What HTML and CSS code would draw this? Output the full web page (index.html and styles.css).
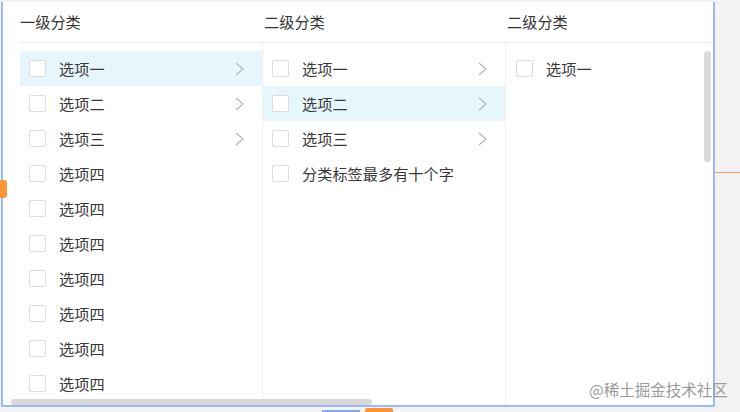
FILE: index.html
```html
<!DOCTYPE html>
<html lang="zh">
<head>
<meta charset="utf-8">
<link rel="stylesheet" href="styles.css">
</head>
<body>
<div class="page">
  <div class="frame">
    <div class="scroller">
      <div class="header">
        <div class="hcell c1">一级分类</div>
        <div class="hcell c2">二级分类</div>
        <div class="hcell c3">二级分类</div>
      </div>
      <div class="cols">
        <div class="col c1">
          <div class="row active"><span class="box"></span><span class="label">选项一</span><svg class="arrow" viewBox="0 0 9 14"><polyline points="1,1 8,7 1,13"/></svg></div>
          <div class="row"><span class="box"></span><span class="label">选项二</span><svg class="arrow" viewBox="0 0 9 14"><polyline points="1,1 8,7 1,13"/></svg></div>
          <div class="row"><span class="box"></span><span class="label">选项三</span><svg class="arrow" viewBox="0 0 9 14"><polyline points="1,1 8,7 1,13"/></svg></div>
          <div class="row"><span class="box"></span><span class="label">选项四</span></div>
          <div class="row"><span class="box"></span><span class="label">选项四</span></div>
          <div class="row"><span class="box"></span><span class="label">选项四</span></div>
          <div class="row"><span class="box"></span><span class="label">选项四</span></div>
          <div class="row"><span class="box"></span><span class="label">选项四</span></div>
          <div class="row"><span class="box"></span><span class="label">选项四</span></div>
          <div class="row"><span class="box"></span><span class="label">选项四</span></div>
        </div>
        <div class="col c2">
          <div class="row"><span class="box"></span><span class="label">选项一</span><svg class="arrow" viewBox="0 0 9 14"><polyline points="1,1 8,7 1,13"/></svg></div>
          <div class="row active"><span class="box"></span><span class="label">选项二</span><svg class="arrow" viewBox="0 0 9 14"><polyline points="1,1 8,7 1,13"/></svg></div>
          <div class="row"><span class="box"></span><span class="label">选项三</span><svg class="arrow" viewBox="0 0 9 14"><polyline points="1,1 8,7 1,13"/></svg></div>
          <div class="row"><span class="box"></span><span class="label">分类标签最多有十个字</span></div>
        </div>
        <div class="col c3">
          <div class="row"><span class="box"></span><span class="label">选项一</span></div>
        </div>
      </div>
    </div>
    <div class="vscroll"></div>
    <div class="hscroll"></div>
    <div class="watermark">@稀土掘金技术社区</div>
  </div>
  <div class="bottom-bits"><span class="bit-blue"></span><span class="bit-orange"></span></div>
  <div class="side-badge"></div>
  <div class="side-line"></div>
</div>
</body>
</html>
```

FILE: styles.css
```css
html, body {
  margin: 0;
  padding: 0;
}
body {
  width: 740px;
  height: 412px;
  overflow: hidden;
  background: #f3f3f5;
  font-family: "Noto Sans CJK SC", "Noto Sans", sans-serif;
  color: #333;
}
.page {
  position: relative;
  width: 740px;
  height: 412px;
  padding-top: 2px;
  padding-left: 1px;
  box-sizing: border-box;
}
.frame {
  position: relative;
  width: 714px;
  height: 405px;
  box-sizing: border-box;
  background: #fff;
  border: 2px solid #9cb9f3;
  border-top: none;
  border-radius: 0 0 2px 2px;
}
.scroller {
  height: 100%;
  overflow: hidden;
  padding-left: 17px;
  box-sizing: border-box;
}
.header {
  display: flex;
  height: 40px;
  align-items: center;
  border-bottom: 1px solid #ededed;
  width: 1000px;
  font-size: 15.2px;
  color: #333;
}
.hcell {
  flex: none;
  box-sizing: border-box;
  padding-bottom: 2px;
}
.hcell.c1 { width: 244px; }
.hcell.c2 { width: 243px; }
.hcell.c3 { width: 243px; }
.cols {
  display: flex;
  height: 400px;
}
.col {
  flex: none;
  width: 243px;
  box-sizing: border-box;
  padding-top: 8px;
  border-right: 1px solid #efefef;
}
.col.c3 {
  border-right: none;
  width: 300px;
}
.row {
  display: flex;
  align-items: center;
  height: 35px;
  font-size: 15.2px;
  color: #383838;
  padding-left: 9px;
  padding-right: 18px;
}
.col.c3 .row { padding-left: 10px; }
.row.active {
  background: #e7f6fd;
}
.box {
  flex: none;
  width: 17px;
  height: 17px;
  box-sizing: border-box;
  border: 1px solid #dcdcdc;
  border-radius: 2px;
  background: #fff;
  margin-right: 13px;
}
.label {
  flex: 1;
  white-space: nowrap;
  padding-bottom: 2px;
}
.arrow {
  flex: none;
  width: 9px;
  height: 14px;
  fill: none;
  stroke: #b2b2b2;
  stroke-width: 1.1;
}
.vscroll {
  position: absolute;
  left: 701px;
  top: 49px;
  width: 7px;
  height: 111px;
  border-radius: 4px;
  background: #dadada;
}
.hscroll {
  position: absolute;
  left: 8px;
  top: 397px;
  width: 361px;
  height: 6px;
  border-radius: 3px;
  background: #d8d8d8;
}
.watermark {
  position: absolute;
  left: 586px;
  top: 376px;
  font-size: 15.5px;
  color: #9b9b9b;
  white-space: nowrap;
}
.bottom-bits {
  display: flex;
  align-items: flex-end;
  gap: 5px;
  margin-left: 321px;
  margin-top: 1px;
  height: 4px;
}
.bit-blue {
  width: 38px;
  height: 2px;
  background: #86a8ee;
}
.bit-orange {
  width: 28px;
  height: 4px;
  background: #f7963a;
  border-radius: 2px 2px 0 0;
}
.side-badge {
  position: absolute;
  left: 0;
  top: 180px;
  width: 7px;
  height: 18px;
  background: #f7963a;
  border-radius: 0 3px 3px 0;
}
.side-line {
  position: absolute;
  left: 715px;
  top: 172px;
  width: 25px;
  height: 1px;
  background: #f6a366;
}
```
